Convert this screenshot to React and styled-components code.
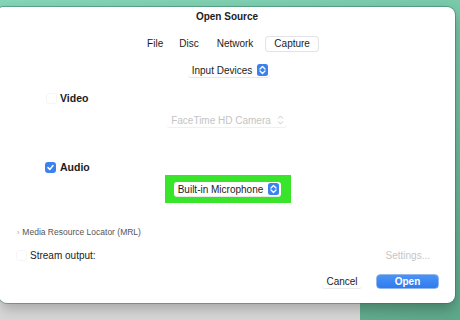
import styled, { createGlobalStyle } from "styled-components";

const Global = createGlobalStyle`
  html, body { margin: 0; padding: 0; }
  body { font-family: "Liberation Sans", Arial, sans-serif; color: #1c1c1c; }
`

const Desktop = styled.div`
  position: relative;
  width: 460px;
  height: 320px;
  overflow: hidden;
  background: linear-gradient(160deg, #86d6b8 0%, #74c4a6 50%, #5ea98b 100%);
`

const BackWindow = styled.div`
  position: absolute;
  left: 0;
  top: 280px;
  width: 360px;
  height: 60px;
  background: linear-gradient(180deg, #f2f2f2 0%, #d9d9d9 60%, #c9c9c9 100%);
`

const Dialog = styled.div`
  position: relative;
  z-index: 1;
  margin-top: 7px;
  margin-left: -1px;
  width: 456px;
  height: 296px;
  background: #fff;
  border-radius: 4px 8px 8px 8px;
  box-shadow: 0 0 0 1px rgba(40, 110, 85, 0.45), 0 6px 14px rgba(0, 0, 0, 0.28);
  display: flex;
  flex-direction: column;
`

const Title = styled.div`
  height: 20px;
  line-height: 20px;
  text-align: center;
  font-weight: bold;
  font-size: 10px;
`

const Row = styled.div`
  display: flex;
  align-items: center;
  height: ${p => p.$h || 14}px;
  margin-top: ${p => p.$mt || 0}px;
  justify-content: ${p => p.$justify || "flex-start"};
  padding-left: ${p => p.$pl || 0}px;
  padding-right: ${p => p.$pr || 0}px;
  gap: ${p => p.$gap || 0}px;
`

const Tab = styled.div`
  font-size: 10px;
  height: 14px;
  line-height: 14px;
  padding: 0 ${p => p.$px || 8}px;
  border-radius: 3px;
  background: ${p => (p.$active ? "#fff" : "transparent")};
  box-shadow: ${p => (p.$active ? "0 0 0 1px #e4e4e4, 0 1px 1px rgba(0,0,0,0.08)" : "none")};
  margin-left: ${p => (p.$active ? 4 : 0)}px;
`

const Popup = styled.div`
  display: flex;
  align-items: center;
  gap: 5px;
  font-size: 10px;
  height: 14px;
  padding: 0 2px 0 4px;
  color: ${p => (p.$disabled ? "#c4c4c4" : "#1c1c1c")};
  background: #fff;
  box-shadow: 0 1px 0 ${p => (p.$disabled ? "#f0f0f0" : "#e8e8e8")};
  border-radius: 3px;
`

const Highlight = styled.div`
  align-self: center;
  margin-top: 1px;
  margin-left: 1px;
  width: 126px;
  height: 28px;
  background: #38e52b;
  display: flex;
  align-items: center;
  justify-content: center;
`

const Label = styled.span`
  font-size: ${p => p.$size || 10}px;
  font-weight: ${p => (p.$bold ? "bold" : "normal")};
  color: ${p => p.$color || "#1c1c1c"};
`

const Check = styled.div`
  width: 11px;
  height: 11px;
  border-radius: 3px;
  box-sizing: border-box;
  margin-left: ${p => p.$ml || 0}px;
  background: ${p => (p.$on ? "#3b82ef" : "#fff")};
  border: ${p => (p.$on ? "none" : "1px solid #f6f6f6")};
  display: flex;
  align-items: center;
  justify-content: center;
`

const Spacer = styled.div`
  flex: 1;
`

const Button = styled.div`
  height: 13px;
  line-height: 13px;
  font-size: 10px;
  text-align: center;
  border-radius: 3px;
  width: ${p => p.$w}px;
  font-weight: ${p => (p.$primary ? "bold" : "normal")};
  color: ${p => (p.$primary ? "#fff" : "#1c1c1c")};
  background: ${p => (p.$primary ? "linear-gradient(#4a93f5, #2f7bee)" : "#fff")};
  box-shadow: ${p => (p.$primary ? "0 0 0 0.5px #2a6fd6" : "0 1px 0 #ececec")};
`

function Stepper({ disabled }) {
  if (disabled) {
    return (
      <svg width="9" height="12" viewBox="0 0 9 12">
        <path d="M2 4.5 L4.5 2 L7 4.5 M2 7.5 L4.5 10 L7 7.5" fill="none" stroke="#c8c8c8" strokeWidth="1" />
      </svg>
    );
  }
  return (
    <svg width="11" height="12" viewBox="0 0 11 12">
      <rect x="0" y="0" width="11" height="12" rx="2.5" fill="#3b82ef" />
      <path d="M3 5 L5.5 2.5 L8 5 M3 7 L5.5 9.5 L8 7" fill="none" stroke="#fff" strokeWidth="1.3" strokeLinecap="round" strokeLinejoin="round" />
    </svg>
  );
}

function Tick() {
  return (
    <svg width="9" height="9" viewBox="0 0 9 9">
      <path d="M2 4.6 L3.8 6.4 L7 2.6" fill="none" stroke="#fff" strokeWidth="1.5" strokeLinecap="round" strokeLinejoin="round" />
    </svg>
  );
}

export default function App() {
  return (
    <Desktop>
      <Global />
      <BackWindow />
      <Dialog>
        <Title>Open Source</Title>
        <Row $mt={10} $justify="center" $pl={4}>
          <Tab $px={7}>File</Tab>
          <Tab $px={9}>Disc</Tab>
          <Tab $px={9}>Network</Tab>
          <Tab $active>Capture</Tab>
        </Row>
        <Row $mt={12} $justify="center" $pl={4}>
          <Popup>
            Input Devices
            <Stepper />
          </Popup>
        </Row>
        <Row $mt={14} $gap={3}>
          <Check $ml={47} />
          <Label $bold $size={10.5}>Video</Label>
        </Row>
        <Row $mt={8} $justify="center">
          <Popup $disabled>
            FaceTime HD Camera
            <Stepper disabled />
          </Popup>
        </Row>
        <Row $mt={33} $gap={4}>
          <Check $ml={46} $on>
            <Tick />
          </Check>
          <Label $bold $size={10.5}>Audio</Label>
        </Row>
        <Highlight>
          <Popup>
            Built-in Microphone
            <Stepper />
          </Popup>
        </Highlight>
        <Row $mt={23} $h={12} $pl={18} $gap={3}>
          <Label $size={7} $color="#9a9a9a">›</Label>
          <Label $size={8.5} $color="#555">Media Resource Locator (MRL)</Label>
        </Row>
        <Row $mt={10} $pr={25} $gap={3}>
          <Check $ml={17} />
          <Label>Stream output:</Label>
          <Spacer />
          <Label $color="#c6c6c6">Settings...</Label>
        </Row>
        <Row $mt={13} $h={13} $pr={17} $gap={15}>
          <Spacer />
          <Button $w={40}>Cancel</Button>
          <Button $w={61} $primary>Open</Button>
        </Row>
      </Dialog>
    </Desktop>
  );
}
